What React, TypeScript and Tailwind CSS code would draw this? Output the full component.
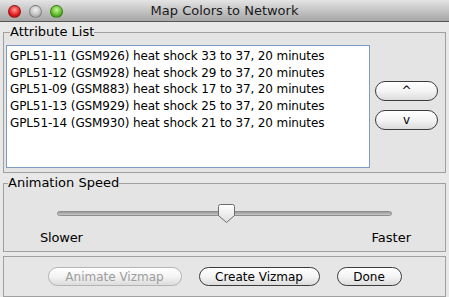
import React from "react";

const ROWS = [
  "GPL51-11 (GSM926) heat shock 33 to 37, 20 minutes",
  "GPL51-12 (GSM928) heat shock 29 to 37, 20 minutes",
  "GPL51-09 (GSM883) heat shock 17 to 37, 20 minutes",
  "GPL51-13 (GSM929) heat shock 25 to 37, 20 minutes",
  "GPL51-14 (GSM930) heat shock 21 to 37, 20 minutes",
];

const font = { fontFamily: '"DejaVu Sans", "Liberation Sans", sans-serif' };

/* ---- Aqua-ish pill button ---- */

function PillButton({
  children,
  disabled,
  className = "",
}: {
  children: React.ReactNode;
  disabled?: boolean;
  className?: string;
}) {
  return (
    <button
      disabled={disabled}
      className={`flex h-[19px] items-center justify-center rounded-full border bg-gradient-to-b from-white via-[#f4f4f4] to-[#dcdcdc] text-[12px] leading-none shadow-[inset_0_1px_0_#fff] ${
        disabled
          ? "border-[#b4b4b4] text-[#9d9d9d]"
          : "border-[#3c3c3c] text-black"
      } ${className}`}
    >
      {children}
    </button>
  );
}

function Light({ color }: { color: string }) {
  return (
    <span
      className={`block h-[13px] w-[13px] rounded-full border border-black/30 ${color}`}
    />
  );
}

export default function App() {
  return (
    <div
      className="flex h-[297px] w-[449px] flex-col overflow-hidden bg-[#e8e8e8] text-black"
      style={font}
    >
      {/* Title bar */}
      <div className="relative flex h-[22px] shrink-0 items-center border-b border-[#555] bg-gradient-to-b from-[#e4e4e4] to-[#a6a6a6]">
        <div className="absolute left-[8px] top-[5px] flex gap-[8px]">
          <Light color="bg-[radial-gradient(circle_at_50%_35%,#ff9c9c,#e0191b_60%,#9a0c0c)]" />
          <Light color="bg-[radial-gradient(circle_at_50%_35%,#f2f2f2,#bdbdbd_60%,#8a8a8a)]" />
          <Light color="bg-[radial-gradient(circle_at_50%_35%,#c8f59b,#57b822_60%,#2f7b0c)]" />
        </div>
        <div className="w-full text-center text-[13px] text-[#1a1a1a]">
          Map Colors to Network
        </div>
      </div>

      {/* Attribute List */}
      <fieldset className="mx-[3px] mt-[3px] h-[148px] shrink-0 border border-[#a0a0a0] bg-[#e4e4e4] px-[2px] pb-[2px]">
        <legend className="ml-[4px] px-0 text-[13px] leading-[14px]">
          Attribute List
        </legend>
        <div className="mt-[6px] flex">
          <div className="h-[123px] w-[364px] border border-[#7e9bc3] bg-white pl-[3px] pt-[2px]">
            {ROWS.map((r) => (
              <div
                key={r}
                className="h-[16.7px] text-[12px] leading-[16.7px] tracking-[-0.12px]"
              >
                {r}
              </div>
            ))}
          </div>
          <div className="ml-[5px] flex flex-col justify-center gap-[9px] pb-[3px]">
            <PillButton className="h-[20px] w-[63px]">^</PillButton>
            <PillButton className="h-[20px] w-[63px]">v</PillButton>
          </div>
        </div>
      </fieldset>

      {/* Animation Speed */}
      <fieldset className="mx-[3px] mt-[3px] h-[76px] shrink-0 border border-[#a0a0a0] bg-[#e4e4e4]">
        <legend className="ml-[4px] px-0 text-[13px] leading-[14px]">
          Animation Speed
        </legend>
        <div className="relative mx-[53px] mt-[17px] h-[20px]">
          <div className="absolute left-0 right-0 top-[4px] h-[5px] rounded-full border border-[#8e8e8e] bg-gradient-to-b from-[#9a9a9a] to-[#c8c8c8]" />
          <svg
            className="absolute left-[161px] top-[-3px]"
            width="17"
            height="19"
            viewBox="0 0 17 19"
          >
            <defs>
              <linearGradient id="thumb" x1="0" y1="0" x2="0" y2="1">
                <stop offset="0" stopColor="#ffffff" />
                <stop offset="1" stopColor="#dedede" />
              </linearGradient>
            </defs>
            <path
              d="M2.5 0.5 H14.5 Q16.5 0.5 16.5 2.5 V11.5 L8.5 18.5 L0.5 11.5 V2.5 Q0.5 0.5 2.5 0.5 Z"
              fill="url(#thumb)"
              stroke="#6c6c6c"
            />
          </svg>
        </div>
        <div className="ml-[36px] mr-[34px] mt-[1px] flex justify-between text-[13px]">
          <span className="tracking-[-0.2px]">Slower</span>
          <span>Faster</span>
        </div>
      </fieldset>

      {/* Buttons */}
      <div className="mx-[3px] mt-[4px] flex flex-1 justify-center gap-[17px] border border-[#a0a0a0] bg-[#e6e6e6] pt-[10px]">
        <PillButton disabled className="w-[134px]">
          Animate Vizmap
        </PillButton>
        <PillButton className="w-[121px]">Create Vizmap</PillButton>
        <PillButton className="w-[65px]">Done</PillButton>
      </div>
    </div>
  );
}
